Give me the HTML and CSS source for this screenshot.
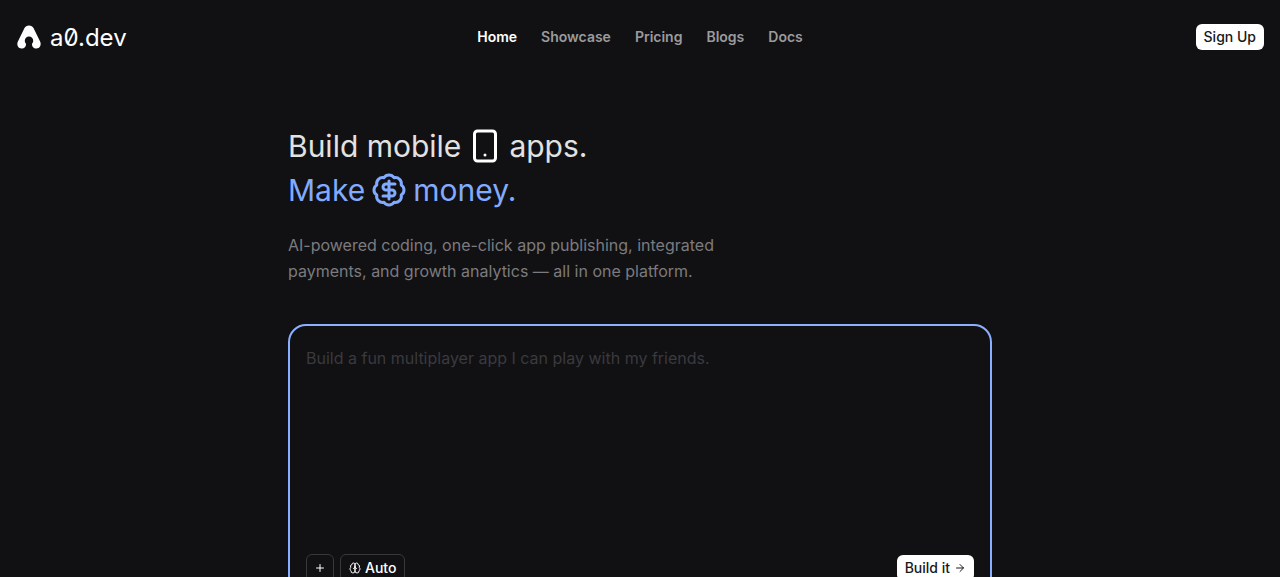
FILE: index.html
```html
<!DOCTYPE html>
<html lang="en">
<head>
    <meta charset="UTF-8">
    <meta name="viewport" content="width=device-width, initial-scale=1.0">
    <title>a0.dev</title>
    <link rel="stylesheet" href="styles.css">
</head>
<body>
    <header class="header">
        <a href="#" class="logo">
            <svg class="logo-icon" viewBox="0 0 26 24" aria-hidden="true">
                <path d="M13 0.4C10.9 0.4 9.4 1.4 8.5 3.1L1.9 16.6C0.3 20.2 2.2 23.6 5.6 23.6C8.4 23.6 10.2 21.5 10 18.8C9.1 18 8.8 16.9 8.8 15.8C8.8 13.4 10.6 11.6 13 11.6C15.4 11.6 17.2 13.4 17.2 15.8C17.2 16.9 16.9 18 16 18.8C15.8 21.5 17.6 23.6 20.4 23.6C23.8 23.6 25.7 20.2 24.1 16.6L17.5 3.1C16.6 1.4 15.1 0.4 13 0.4Z"/>
            </svg>
            <span>a0.dev</span>
        </a>
        <nav class="nav">
            <a href="#" class="active">Home</a>
            <a href="#">Showcase</a>
            <a href="#">Pricing</a>
            <a href="#">Blogs</a>
            <a href="#">Docs</a>
        </nav>
        <div class="account">
            <button type="button" class="btn btn-light">Sign Up</button>
        </div>
    </header>

    <main class="hero">
        <h1 class="title">
            <span class="title-line">
                Build mobile
                <svg class="title-icon icon-phone" viewBox="0 0 24 24" aria-hidden="true">
                    <rect x="5" y="2" width="14" height="20" rx="2"/>
                    <path d="M12 18h.01"/>
                </svg>
                apps.
            </span>
            <span class="title-line accent">
                Make
                <svg class="title-icon" viewBox="0 0 24 24" aria-hidden="true">
                    <path d="M3.85 8.62a4 4 0 0 1 4.78-4.77 4 4 0 0 1 6.74 0 4 4 0 0 1 4.78 4.78 4 4 0 0 1 0 6.74 4 4 0 0 1-4.77 4.78 4 4 0 0 1-6.75 0 4 4 0 0 1-4.78-4.77 4 4 0 0 1 0-6.76Z"/>
                    <path d="M16 8h-6a2 2 0 1 0 0 4h4a2 2 0 1 1 0 4H8"/>
                    <path d="M12 18V6"/>
                </svg>
                money.
            </span>
        </h1>
        <p class="subtitle">AI-powered coding, one-click app publishing, integrated payments, and growth analytics — all in one platform.</p>

        <form class="prompt">
            <textarea class="prompt-input" aria-label="Describe your app" placeholder="Build a fun multiplayer app I can play with my friends."></textarea>
            <div class="prompt-bar">
                <button type="button" class="btn btn-outline btn-square" aria-label="Add">
                    <svg class="btn-icon" viewBox="0 0 24 24" aria-hidden="true">
                        <path d="M5 12h14M12 5v14"/>
                    </svg>
                </button>
                <button type="button" class="btn btn-outline">
                    <svg class="btn-icon" viewBox="0 0 24 24" aria-hidden="true">
                        <path d="M12 5a3 3 0 1 0-5.997.125 4 4 0 0 0-2.526 5.77 4 4 0 0 0 .556 6.588A4 4 0 1 0 12 18Z"/>
                        <path d="M12 5a3 3 0 1 1 5.997.125 4 4 0 0 1 2.526 5.77 4 4 0 0 1-.556 6.588A4 4 0 1 1 12 18Z"/>
                        <path d="M15 13a4.5 4.5 0 0 1-3-4 4.5 4.5 0 0 1-3 4"/>
                    </svg>
                    Auto
                </button>
                <button type="button" class="btn btn-light btn-build">
                    Build it
                    <svg class="btn-icon" viewBox="0 0 24 24" aria-hidden="true">
                        <path d="M5 12h14M12 5l7 7-7 7"/>
                    </svg>
                </button>
            </div>
        </form>
    </main>
</body>
</html>
```
FILE: styles.css
```css
* {
    box-sizing: border-box;
}
body {
    margin: 0;
    background-color: #111113;
    color: #e2e2e2;
    font-family: Inter, sans-serif;
    font-size: 16px;
}
a {
    color: inherit;
    text-decoration: none;
}
svg {
    flex-shrink: 0;
    fill: none;
    stroke: currentColor;
    stroke-width: 2;
    stroke-linecap: round;
    stroke-linejoin: round;
}
.header {
    display: grid;
    grid-template-columns: 1fr auto 1fr;
    align-items: center;
    height: 74px;
    padding: 0 16px;
}
.logo {
    display: flex;
    align-items: center;
    gap: 8px;
    color: #fff;
    font-size: 24px;
    font-feature-settings: "zero";
}
.logo-icon {
    width: 26px;
    height: 24px;
    fill: currentColor;
    stroke: none;
}
.nav {
    display: flex;
    gap: 24px;
    color: #9b9b9f;
    font-size: 14px;
    font-weight: 600;
    line-height: 20px;
}
.nav .active {
    color: #fff;
}
.account {
    display: flex;
    justify-content: flex-end;
}
.btn {
    display: flex;
    align-items: center;
    gap: 4px;
    height: 28px;
    padding: 0 8px;
    border: none;
    border-radius: 6px;
    font-family: inherit;
    font-size: 14px;
    font-weight: 500;
    line-height: 20px;
    cursor: pointer;
}
.btn-light {
    height: 26px;
    background-color: #fff;
    color: #18181b;
}
.btn-outline {
    border: 1px solid #38383c;
    background-color: transparent;
    color: #fff;
}
.btn-square {
    width: 28px;
    justify-content: center;
}
.btn-build {
    margin-left: auto;
}
.btn-icon {
    width: 12px;
    height: 12px;
}
.hero {
    max-width: 736px;
    margin: 0 auto;
    padding: 50px 16px 64px;
}
.title {
    margin: 0;
    font-size: 30px;
    font-weight: 400;
    line-height: 44px;
}
.title-line {
    display: flex;
    align-items: center;
    gap: 6px;
}
.title-icon {
    width: 36px;
    height: 36px;
}
.icon-phone {
    color: #fff;
}
.accent {
    color: #82aaff;
}
.subtitle {
    max-width: 448px;
    margin: 20px 0 40px;
    color: #7b7b7f;
    line-height: 26px;
}
.prompt {
    padding: 16px;
    border: 2px solid #8ab0ff;
    border-radius: 18px;
}
.prompt-input {
    display: block;
    width: 100%;
    height: 204px;
    margin-bottom: 8px;
    padding: 4px 0;
    border: none;
    outline: none;
    resize: none;
    background-color: transparent;
    color: #e2e2e2;
    font-family: inherit;
    font-size: 16px;
    line-height: 24px;
}
.prompt-input::placeholder {
    color: #3a3a3f;
}
.prompt-bar {
    display: flex;
    align-items: center;
    gap: 6px;
}
```
